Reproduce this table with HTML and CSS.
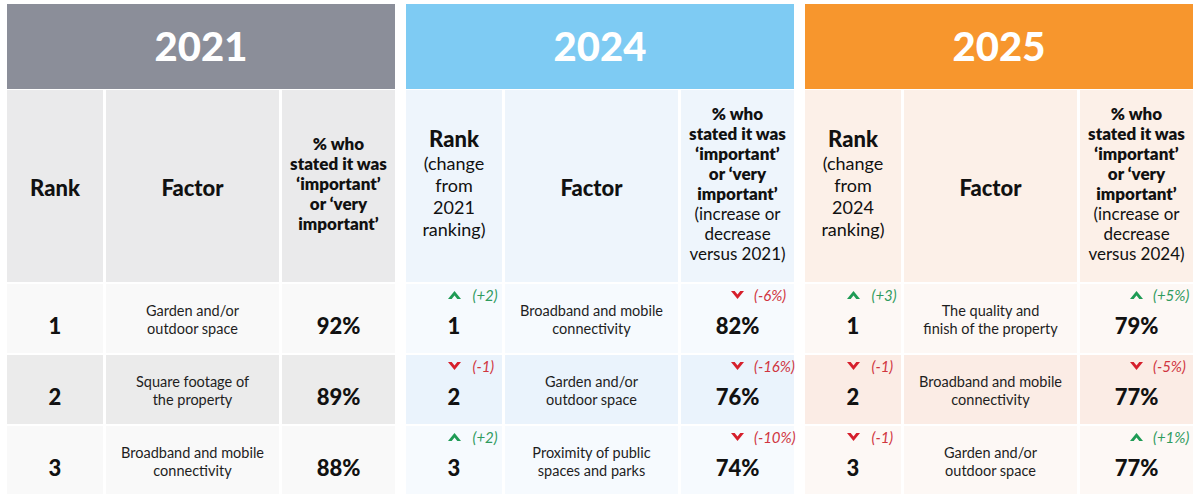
FILE: index.html
```html
<!DOCTYPE html>
<html lang="en">
<head>
<meta charset="utf-8">
<title>Ranking of property factors</title>
<link rel="stylesheet" href="styles.css">
</head>
<body>
<svg width="0" height="0" class="defs" aria-hidden="true">
  <defs>
    <symbol id="up" viewBox="0 0 13 8"><path d="M0 8 L6.5 0 L13 8 L9.3 8 L6.5 4.6 L3.7 8 Z"/></symbol>
    <symbol id="down" viewBox="0 0 13 8"><path d="M0 0 L6.5 8 L13 0 L9.3 0 L6.5 3.4 L3.7 0 Z"/></symbol>
  </defs>
</svg>
<main class="board">

  <section class="panel p2021">
    <h2 class="year">2021</h2>
    <div class="hcell"><span class="hbig">Rank</span></div>
    <div class="hcell"><span class="hbig">Factor</span></div>
    <div class="hcell hpct"><b>% who<br>stated it was<br>‘important’<br>or ‘very<br>important’</b></div>

    <div class="cell rank r1"><div class="ind"></div><div class="num">1</div></div>
    <div class="cell factor r1">Garden and/or<br>outdoor space</div>
    <div class="cell rank r1"><div class="ind"></div><div class="num pct">92%</div></div>

    <div class="cell rank r2"><div class="ind"></div><div class="num">2</div></div>
    <div class="cell factor r2">Square footage of<br>the property</div>
    <div class="cell rank r2"><div class="ind"></div><div class="num pct">89%</div></div>

    <div class="cell rank r3"><div class="ind"></div><div class="num">3</div></div>
    <div class="cell factor r3">Broadband and mobile<br>connectivity</div>
    <div class="cell rank r3"><div class="ind"></div><div class="num pct">88%</div></div>
  </section>

  <section class="panel p2024">
    <h2 class="year">2024</h2>
    <div class="hcell hrank"><span class="hbig">Rank</span><span>(change<br>from<br>2021<br>ranking)</span></div>
    <div class="hcell"><span class="hbig">Factor</span></div>
    <div class="hcell hpct"><b>% who<br>stated it was<br>‘important’<br>or ‘very<br>important’</b><span>(increase or<br>decrease<br>versus 2021)</span></div>

    <div class="cell rank r1"><div class="ind ind-rank up"><svg class="arrow"><use href="#up"/></svg><i>(+2)</i></div><div class="num">1</div></div>
    <div class="cell factor r1">Broadband and mobile<br>connectivity</div>
    <div class="cell rank r1"><div class="ind down"><svg class="arrow"><use href="#down"/></svg><i>(-6%)</i></div><div class="num pct">82%</div></div>

    <div class="cell rank r2"><div class="ind ind-rank down"><svg class="arrow"><use href="#down"/></svg><i>(-1)</i></div><div class="num">2</div></div>
    <div class="cell factor r2">Garden and/or<br>outdoor space</div>
    <div class="cell rank r2"><div class="ind down"><svg class="arrow"><use href="#down"/></svg><i>(-16%)</i></div><div class="num pct">76%</div></div>

    <div class="cell rank r3"><div class="ind ind-rank up"><svg class="arrow"><use href="#up"/></svg><i>(+2)</i></div><div class="num">3</div></div>
    <div class="cell factor r3">Proximity of public<br>spaces and parks</div>
    <div class="cell rank r3"><div class="ind down"><svg class="arrow"><use href="#down"/></svg><i>(-10%)</i></div><div class="num pct">74%</div></div>
  </section>

  <section class="panel p2025">
    <h2 class="year">2025</h2>
    <div class="hcell hrank"><span class="hbig">Rank</span><span>(change<br>from<br>2024<br>ranking)</span></div>
    <div class="hcell"><span class="hbig">Factor</span></div>
    <div class="hcell hpct"><b>% who<br>stated it was<br>‘important’<br>or ‘very<br>important’</b><span>(increase or<br>decrease<br>versus 2024)</span></div>

    <div class="cell rank r1"><div class="ind ind-rank up"><svg class="arrow"><use href="#up"/></svg><i>(+3)</i></div><div class="num">1</div></div>
    <div class="cell factor r1">The quality and<br>finish of the property</div>
    <div class="cell rank r1"><div class="ind up"><svg class="arrow"><use href="#up"/></svg><i>(+5%)</i></div><div class="num pct">79%</div></div>

    <div class="cell rank r2"><div class="ind ind-rank down"><svg class="arrow"><use href="#down"/></svg><i>(-1)</i></div><div class="num">2</div></div>
    <div class="cell factor r2">Broadband and mobile<br>connectivity</div>
    <div class="cell rank r2"><div class="ind down"><svg class="arrow"><use href="#down"/></svg><i>(-5%)</i></div><div class="num pct">77%</div></div>

    <div class="cell rank r3"><div class="ind ind-rank down"><svg class="arrow"><use href="#down"/></svg><i>(-1)</i></div><div class="num">3</div></div>
    <div class="cell factor r3">Garden and/or<br>outdoor space</div>
    <div class="cell rank r3"><div class="ind up"><svg class="arrow"><use href="#up"/></svg><i>(+1%)</i></div><div class="num pct">77%</div></div>
  </section>

</main>
</body>
</html>
```

FILE: styles.css
```css
* { box-sizing: border-box; }

html, body {
  margin: 0;
  padding: 0;
  background: #ffffff;
}

body {
  font-family: Lato, "Open Sans", "Liberation Sans", sans-serif;
  color: #151515;
  width: 1200px;
  height: 494px;
  overflow: hidden;
}

.defs {
  position: absolute;
  width: 0;
  height: 0;
}

.board {
  display: flex;
  gap: 11px;
  padding: 4px 7px 0 7px;
}

.panel {
  width: 388px;
  display: grid;
  grid-template-columns: 96px 173px 113px;
  grid-template-rows: 84px 192px 69px 69px 69px;
  column-gap: 3px;
  row-gap: 2px;
}

.year {
  grid-column: 1 / -1;
  margin: 0 0 -1px 0;
  display: flex;
  align-items: center;
  justify-content: center;
  color: #ffffff;
  font-size: 40px;
  font-weight: 900;
  padding-bottom: 2px;
}

.p2021 .year { background: #8b8e99; }
.p2024 .year { background: #7ecbf3; }
.p2025 .year { background: #f7962d; }

.hcell {
  display: flex;
  flex-direction: column;
  align-items: center;
  justify-content: center;
  text-align: center;
  color: #111;
}

.p2021 .hcell { background: #eaeaeb; }
.p2024 .hcell { background: #eef5fc; }
.p2025 .hcell { background: #fcf0e8; }

.hbig {
  font-size: 22px;
  font-weight: 900;
  line-height: 26px;
  padding-top: 3px;
}

.hrank {
  font-size: 18px;
  line-height: 22px;
  padding-bottom: 6px;
}

.hrank .hbig {
  padding-top: 0;
}

.hpct {
  font-size: 17px;
  line-height: 20px;
  padding-bottom: 5px;
}

.hpct b {
  font-weight: 800;
}

.hpct span {
  font-weight: 400;
}

.cell {
  display: flex;
  flex-direction: column;
  align-items: center;
  text-align: center;
}

.p2021 .r1, .p2021 .r3 { background: #f9f9f9; }
.p2021 .r2 { background: #ebebeb; }
.p2024 .r1, .p2024 .r3 { background: #f6fafe; }
.p2024 .r2 { background: #eaf3fc; }
.p2025 .r1, .p2025 .r3 { background: #fdf8f5; }
.p2025 .r2 { background: #fbece5; }

.rank {
  padding-top: 4px;
}

.factor {
  justify-content: center;
  font-size: 14.5px;
  line-height: 17.5px;
  color: #1e1e1e;
  padding-top: 2px;
}

.ind {
  width: 100%;
  height: 14px;
  display: grid;
  grid-template-columns: minmax(0, 1fr) 13px minmax(0, 1fr);
  align-items: center;
}

.ind .arrow {
  grid-column: 2;
  width: 13px;
  height: 8px;
  display: block;
}

.ind i {
  grid-column: 3;
  justify-self: start;
  margin-left: 10px;
  font-size: 15px;
  line-height: 14px;
  white-space: nowrap;
  font-weight: 400;
}

.ind-rank i {
  margin-left: 12px;
}

.up .arrow { fill: #1f9b55; }
.up i { color: #2f9b5e; }
.down .arrow { fill: #d61f2c; }
.down i { color: #d0353f; }

.num {
  margin-top: 11px;
  font-size: 22px;
  line-height: 26px;
  font-weight: 900;
  color: #111;
}

.num.pct {
  font-size: 22px;
}
```
